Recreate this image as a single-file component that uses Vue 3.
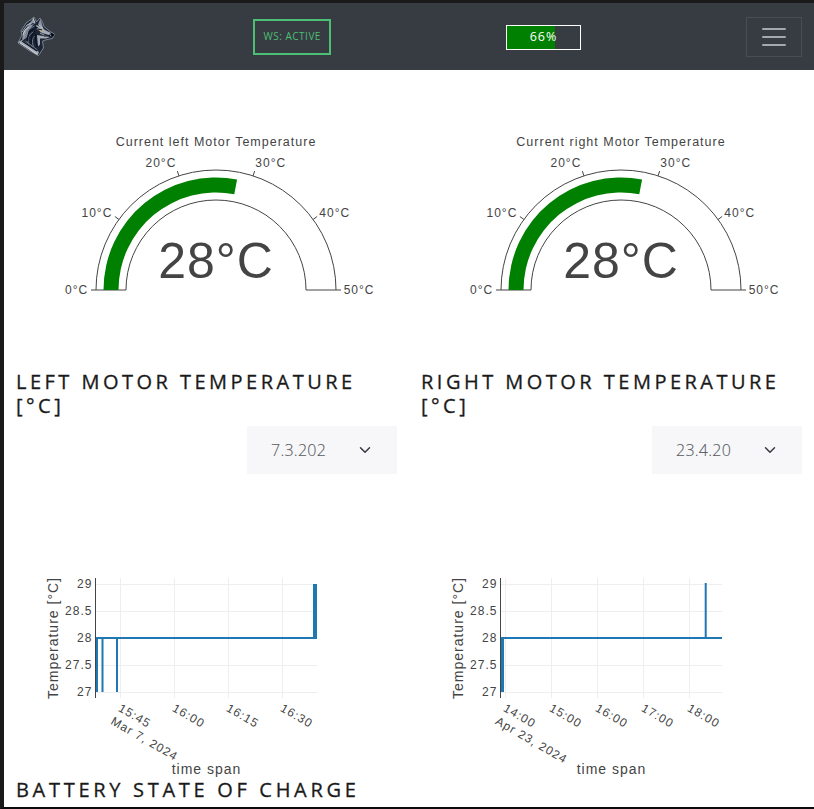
<script setup>
const polar = (r, value) => {
  const a = Math.PI * (1 - value / 50)
  return [216 + r * Math.cos(a), 290 - r * Math.sin(a)]
}
const arc = (outer, inner, value) => {
  const [a, b, c, d] = [polar(outer, 0), polar(outer, value), polar(inner, value), polar(inner, 0)]
  return `M${a} A${outer} ${outer} 0 0 1 ${b} L${c} A${inner} ${inner} 0 0 0 ${d} Z`
}
const gaugeTicks = [
  { v: 0, x: 65 }, { v: 10, x: 81.5 }, { v: 20, x: 145.5 },
  { v: 30, x: 255.3 }, { v: 40, x: 319.3 }, { v: 50, x: 343.7 }
].map((t, i) => ({
  ...t,
  y: [294, 217, 167, 167, 217, 294][i],
  d: `M${polar(120, t.v)} L${polar(125, t.v)}`
}))
const yTicks = [29, 28.5, 28, 27.5, 27].map((label, i) => ({ label, y: 584.5 + i * 27 }))

const motors = [
  {
    side: 'left', value: 28, date: '7.3.202',
    xTicks: [['15:45', 120.5], ['16:00', 174.5], ['16:15', 228.5], ['16:30', 282.5]],
    day: 'Mar 7, 2024', dayX: 110, dayY: 723.5,
    line: 'M97 692V638H102.5V692V638H117V692V638H314V584V638H316V584V638'
  },
  {
    side: 'right', value: 28, date: '23.4.20',
    xTicks: [['14:00', 100.5], ['15:00', 146.5], ['16:00', 192.5], ['17:00', 238.5], ['18:00', 284.5]],
    day: 'Apr 23, 2024', dayX: 89.5, dayY: 723.5,
    line: 'M96.5 692V638H98V692V638H300.7V583V638H317'
  }
]
</script>

<template>
  <div class="window">
    <nav class="navbar">
      <svg class="logo" viewBox="16 16 40 41" width="40" height="41">
        <path fill="#1c2536" stroke="#8f98a4" stroke-width=".8" d="M18 43 22 35 21 31 26 23 31 19.500 34 17 36.500 22 40 18 42.500 22 44 26.500 50 31.500 54.500 34 52.500 38.500 47 39.500 42.500 41 43.500 48 38.500 55.500 29 50.500 18 43Z" />
        <path fill="#8d96a1" d="m29 24 4.500-6 2 6-3-1-5 5Zm10-2 1.500-3 1.500 5 1 4-5-3ZM23 32l5-6 6-2-5 6-2 7-5 4Z" />
        <path fill="#a4abb4" d="m36 25 6 2 3 3 6 3-2 2-7-2-5-4ZM37 35l6 1 7 1-4 1.500-6 0 0 6-2 2Z" />
        <path fill="#a6adb6" d="m18 42 4-2 17 12-1.500 3.500Z" />
        <path fill="none" stroke="#6d7a8c" d="m25 39 2.500-9 7-4m-6 18c-2-6 1-10 5-12m0 15c-2-6-1-10 2-11m-9-10 5-4m-6 19 12 9" />
        <path fill="none" stroke="#dadfe4" stroke-width=".7" d="m22 32 5-7 4-2m2-5 2 5m-12 12 2-5 4-3m10-2 4 3m-3 5 6 3 6-1M20 43l17 11" />
        <path fill="none" stroke="#0a1120" stroke-width="1.200" d="m27 41 2-9 5-3m-3 15 1-9 3-4m0-4 3 1m-2 6c-2 5 1 9 1 13m-15-6 15 10m1-22 4 1m2 6 6-.5" />
        <path fill="#e0ab58" d="m39.500 30 3 1-2 1Z" />
        <path fill="#050812" d="m51 33 3.500 1.500-1.500 2-2-1Z" />
      </svg>
      <div class="status">WS: ACTIVE</div>
      <div class="battery">
        <div class="charge" :style="{ width: '66%' }"></div>
        <span>66%</span>
      </div>
      <button class="toggler" aria-label="Menu"><i></i><i></i><i></i></button>
    </nav>

    <main class="grid">
      <section v-for="m in motors" :key="m.side" class="column">
        <svg class="plot" viewBox="4 70 405 300" width="405" height="300">
          <path class="outline" :d="arc(120, 90, 50)" />
          <path fill="green" :d="arc(112.5, 97.5, m.value)" />
          <text class="caption" x="216" y="146" text-anchor="middle">Current {{ m.side }} Motor Temperature</text>
          <g v-for="t in gaugeTicks" :key="t.v">
            <path class="tick" :d="t.d" />
            <text :x="t.x" :y="t.y">{{ t.v }}°C</text>
          </g>
          <text class="reading" x="216" y="278" text-anchor="middle">{{ m.value }}°C</text>
        </svg>

        <h5 class="title">{{ m.side }} motor temperature [°C]</h5>
        <div class="select">
          <span>{{ m.date }}</span>
          <svg viewBox="0 0 16 16" width="12" height="12">
            <path d="m2 5 6 6 6-6" fill="none" stroke="#343a40" stroke-width="2" stroke-linecap="round" stroke-linejoin="round" />
          </svg>
        </div>

        <svg class="plot" viewBox="4 474 405 304" width="405" height="304">
          <path v-for="[label, x] in m.xTicks" :key="label" class="gridline" :d="`M${x} 578V698`" />
          <g v-for="t in yTicks" :key="t.label">
            <path class="gridline" :d="`M96 ${t.y}H317`" />
            <text x="92.4" :y="t.y + 3.5" text-anchor="end">{{ t.label }}</text>
          </g>
          <path class="series" :d="m.line" />
          <path class="axis" d="M95.5 578V698" />
          <text v-for="[label, x] in m.xTicks" :key="label" :transform="`translate(${x - 3} 710.5) rotate(30)`">{{ label }}</text>
          <text :transform="`translate(${m.dayX} ${m.dayY}) rotate(30)`">{{ m.day }}</text>
          <text class="label" x="206.5" y="774" text-anchor="middle">time span</text>
          <text class="label" transform="translate(58 638) rotate(-90)" text-anchor="middle">Temperature [°C]</text>
        </svg>
      </section>
    </main>
    <h5 class="title wide">Battery state of charge</h5>
  </div>
</template>

<style>
body { background: #fff; overflow: hidden; }
</style>

<style scoped>
.window {
  box-sizing: border-box;
  width: 814px;
  height: 809px;
  overflow: hidden;
  border: solid #1b1a1a;
  border-width: 3px 0 2px 4px;
  border-bottom-color: #0c0a0c;
  font-family: "Open Sans", sans-serif;
  color: #1a1a1a;
}
.navbar {
  box-sizing: border-box;
  height: 67px;
  padding: 0 12px;
  display: flex;
  align-items: center;
  background: #373b42;
}
.logo { flex: none; }
.status {
  box-sizing: border-box;
  width: 78px;
  height: 36px;
  margin-left: 197px;
  border: 2px solid #4bbf73;
  color: #4bbf73;
  font-size: 10px;
  line-height: 31px;
  letter-spacing: 0.5px;
  text-indent: 0.5px;
  text-align: center;
  white-space: nowrap;
}
.battery {
  box-sizing: border-box;
  display: grid;
  width: 75px;
  height: 25px;
  margin-left: 175px;
  margin-top: 1px;
  border: 1px solid #fff;
}
.battery > * { grid-area: 1 / 1; }
.battery span {
  color: #fff;
  font-size: 12.5px;
  line-height: 22px;
  letter-spacing: 1px;
  text-align: center;
}
.charge { background: green; }
.toggler {
  box-sizing: border-box;
  display: flex;
  flex-direction: column;
  align-items: center;
  justify-content: center;
  gap: 6px;
  width: 56px;
  height: 40px;
  margin-left: 165px;
  padding: 0;
  border: 1px solid #4a4e52;
  background: none;
}
.toggler i { width: 24px; height: 2px; background: #a5a9ab; border-radius: 1px; }
.grid { display: grid; grid-template-columns: 405px 405px; }
.plot { display: block; }
.plot text {
  font-family: "Liberation Sans", sans-serif;
  font-size: 12px;
  letter-spacing: 1px;
  fill: #444;
  white-space: pre;
}
.plot .caption { font-size: 12.5px; }
.plot .reading { font-size: 50px; }
.plot .label { font-size: 14px; }
.outline { fill: none; stroke: #444; stroke-width: 1; }
.tick { stroke: #444; stroke-width: 1; }
.gridline { stroke: #eee; stroke-width: 1; }
.axis { stroke: #444; stroke-width: 1; }
.series { fill: none; stroke: #1f77b4; stroke-width: 2; }
.title {
  margin: 0;
  padding: 0 12px;
  font-size: 20px;
  font-weight: 400;
  line-height: 24px;
  letter-spacing: 3.48px;
  text-transform: uppercase;
  -webkit-text-stroke: 0.3px #1a1a1a;
}
.title.wide { letter-spacing: 3.7px; }
.select {
  box-sizing: border-box;
  display: flex;
  align-items: center;
  justify-content: space-between;
  width: 150px;
  height: 48px;
  margin: 8px 12px 0 auto;
  padding: 0 26px 0 24px;
  background: #f7f7f9;
  color: #55595c;
  font-size: 16px;
  font-weight: 300;
  letter-spacing: 0.25px;
  -webkit-text-stroke: 0.1px #55595c;
}
</style>
